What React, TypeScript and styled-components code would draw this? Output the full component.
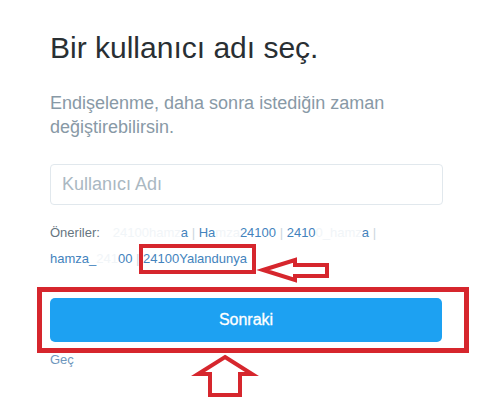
import { createGlobalStyle, styled } from 'styled-components';

const red = '#d6262d';

const GlobalStyle = createGlobalStyle`
  html, body {
    margin: 0;
    padding: 0;
    background: #fff;
  }
  body {
    font-family: 'Liberation Sans', Arial, sans-serif;
    overflow: hidden;
  }
  * {
    box-sizing: border-box;
  }
`;

const Page = styled.div`
  width: 500px;
  height: 401px;
  padding: 31px 0 0 50px;
`;

const Form = styled.div`
  width: 393px;
  display: flex;
  flex-direction: column;
`;

const Title = styled.h1`
  margin: 0;
  font-size: 30px;
  line-height: 34px;
  font-weight: normal;
  color: #292f33;
`;

const Subtitle = styled.p`
  margin: 26px 0 0;
  font-size: 18px;
  line-height: 24px;
  color: #8899a6;
`;

const Input = styled.input`
  margin-top: 25px;
  height: 41px;
  width: 100%;
  padding: 0 11px;
  border: 1px solid #e1e8ed;
  border-radius: 4px;
  font-family: inherit;
  font-size: 18px;
  color: #292f33;
  outline: none;

  &::placeholder {
    color: #aab8c2;
  }
`;

const Suggestions = styled.p`
  margin: 15px 0 0;
  font-size: 13px;
  line-height: 26px;
  color: #4383bd;
`;

const Label = styled.span`
  color: #66757f;
  margin-right: 13px;
`;

const Name = styled.a`
  color: #4383bd;
  text-decoration: none;
  cursor: pointer;
`;

const Redacted = styled.span`
  color: #f1f5f8;
`;

const Sep = styled.span`
  color: #ccd6dd;
`;

const Highlight = styled(Name)`
  position: relative;

  &::after {
    content: '';
    position: absolute;
    left: -4px;
    right: -9px;
    top: -7px;
    bottom: -8px;
    border: 4px solid ${red};
    pointer-events: none;
  }
`;

const LeftArrow = styled.svg`
  position: absolute;
  left: 116px;
  top: 5px;
  overflow: visible;
`;

const ButtonWrap = styled.div`
  position: relative;
  margin-top: 26px;

  &::after {
    content: '';
    position: absolute;
    left: -13px;
    right: -26px;
    top: -11px;
    bottom: -11px;
    border: 5px solid ${red};
    pointer-events: none;
  }
`;

const Button = styled.button`
  display: block;
  width: 392px;
  height: 44px;
  border: none;
  border-radius: 5px;
  background: #1da1f2;
  color: #fff;
  font-family: inherit;
  font-size: 16px;
  font-weight: normal;
  -webkit-text-stroke: 0.3px #fff;
  cursor: pointer;
`;

const UpArrow = styled.svg`
  position: absolute;
  left: 144px;
  top: 55px;
  overflow: visible;
`;

const Skip = styled.a`
  margin-top: 8px;
  font-size: 13px;
  line-height: 20px;
  color: #6f97bd;
  text-decoration: none;
  cursor: pointer;
`;

export default function App() {
  return (
    <>
      <GlobalStyle />
      <Page>
        <Form>
          <Title>Bir kullanıcı adı seç.</Title>
          <Subtitle>Endişelenme, daha sonra istediğin zaman değiştirebilirsin.</Subtitle>
          <Input placeholder="Kullanıcı Adı" />
          <Suggestions>
            <Label>Öneriler:</Label>
            <Name>
              <Redacted>24100hamz</Redacted>a
            </Name>{' '}
            <Sep>|</Sep>{' '}
            <Name>
              Ha<Redacted>mza</Redacted>24100
            </Name>{' '}
            <Sep>|</Sep>{' '}
            <Name>
              2410<Redacted>0_hamz</Redacted>a
            </Name>{' '}
            <Sep>|</Sep>{' '}
            <Name>
              hamza_<Redacted>241</Redacted>00
            </Name>{' '}
            <Sep>|</Sep>{' '}
            <Highlight>
              24100Yalandunya
              <LeftArrow width="72" height="28" viewBox="0 0 72 28">
                <path
                  d="M4 14 L36 4 L36 9 L68 9 L68 20 L36 20 L36 24 Z"
                  fill="none"
                  stroke={red}
                  strokeWidth="4"
                  strokeLinejoin="miter"
                />
              </LeftArrow>
            </Highlight>
          </Suggestions>
          <ButtonWrap>
            <Button>Sonraki</Button>
            <UpArrow width="62" height="46" viewBox="0 0 62 46">
              <path
                d="M31 4 L58 21 L46 21 L46 42 L16 42 L16 21 L4 21 Z"
                fill="none"
                stroke={red}
                strokeWidth="4"
                strokeLinejoin="miter"
              />
            </UpArrow>
          </ButtonWrap>
          <Skip>Geç</Skip>
        </Form>
      </Page>
    </>
  );
}
